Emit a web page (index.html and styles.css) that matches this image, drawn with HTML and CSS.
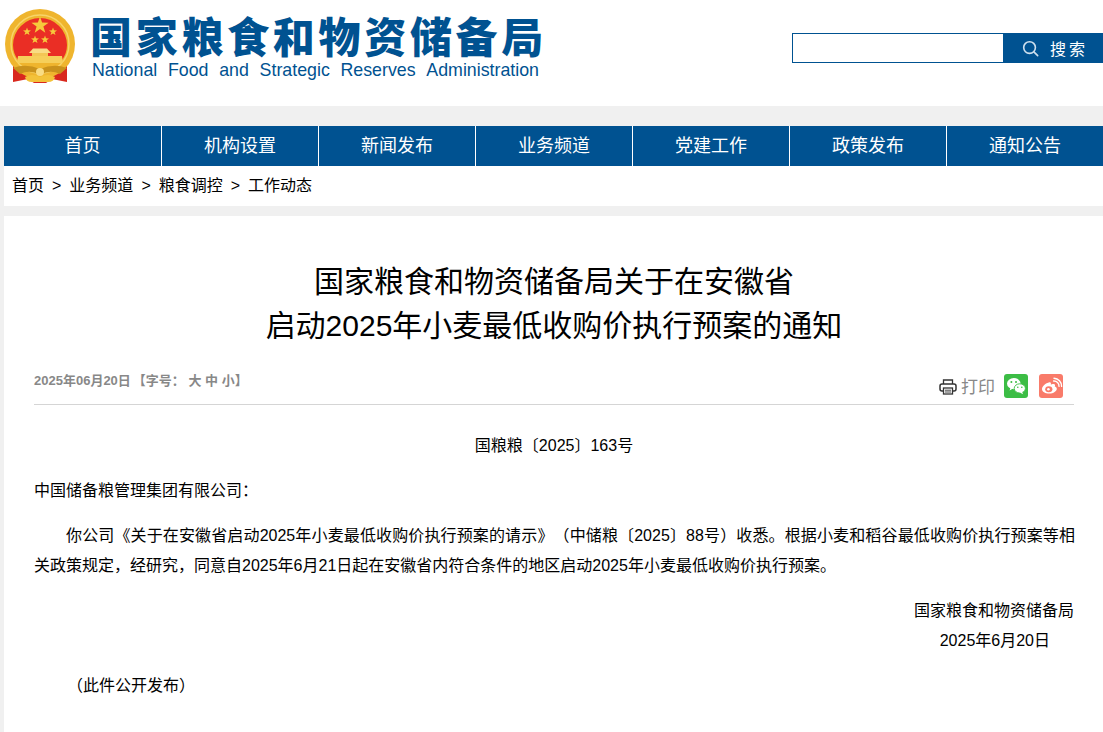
FILE: index.html
```html
<!DOCTYPE html>
<html lang="zh-CN">
<head>
<meta charset="utf-8">
<title>国家粮食和物资储备局</title>
<link rel="stylesheet" href="styles.css">
</head>
<body>
<header class="header">
  <div class="brand">
    <svg class="emblem" viewBox="0 0 72 76" width="72" height="76" aria-hidden="true">
      <path d="M9 50 L9 73 L24 70 L30 74 L42 74 L48 70 L63 73 L63 50 Z" fill="#d9281e"/>
      <circle cx="36" cy="35" r="35" fill="#efb52e"/>
      <circle cx="36" cy="35" r="29" fill="none" stroke="#f7d469" stroke-width="1.5"/>
      <path d="M9 36 A27 27 0 0 1 63 36 C63 42 61 47 58 51 L14 51 C11 47 9 42 9 36 Z" fill="#ea2e25"/>
      <polygon points="36,7.5 38.1,13.6 44.6,13.7 39.4,17.6 41.3,23.8 36,20.1 30.7,23.8 32.6,17.6 27.4,13.7 33.9,13.6" fill="#f6c93c"/>
      <polygon points="23,18.5 24,21.3 27,21.4 24.6,23.2 25.5,26.1 23,24.4 20.5,26.1 21.4,23.2 19,21.4 22,21.3" fill="#f6c93c"/>
      <polygon points="49,18.5 50,21.3 53,21.4 50.6,23.2 51.5,26.1 49,24.4 46.5,26.1 47.4,23.2 45,21.4 48,21.3" fill="#f6c93c"/>
      <polygon points="31,26.5 32,29.3 35,29.4 32.6,31.2 33.5,34.1 31,32.4 28.5,34.1 29.4,31.2 27,29.4 30,29.3" fill="#f6c93c"/>
      <polygon points="41,26.5 42,29.3 45,29.4 42.6,31.2 43.5,34.1 41,32.4 38.5,34.1 39.4,31.2 37,29.4 40,29.3" fill="#f6c93c"/>
      <path d="M25 44 L29 39.5 L43 39.5 L47 44 Z" fill="#f9dc84"/>
      <path d="M28 44 h16 v3 h-16 Z" fill="#f3c655"/>
      <path d="M24 47 h24 v4 h-24 Z" fill="#f9dc84"/>
      <path d="M14 47 h44 l1 7 h-46 Z" fill="#f6cf5a"/>
      <path d="M9 59 Q22 54 36 60 Q50 54 63 59 L56 65 Q46 60 36 66 Q26 60 16 65 Z" fill="#c9921c"/>
      <path d="M21 68 Q28 64 36 68 Q44 64 51 68 Q50 73 44 73 L28 73 Q22 73 21 68 Z" fill="#f3c23a"/>
      <circle cx="36" cy="63" r="4" fill="#f9dc84"/>
    </svg>
    <div class="brand-text">
      <div class="brand-cn">国家粮食和物资储备局</div>
      <div class="brand-en"><span>National</span><span>Food</span><span>and</span><span>Strategic</span><span>Reserves</span><span>Administration</span></div>
    </div>
  </div>
  <form class="search">
    <input class="search-input" type="text" aria-label="搜索">
    <button class="search-btn" type="button">
      <svg viewBox="0 0 18 18" width="17" height="17" aria-hidden="true"><circle cx="8" cy="8" r="6.2" fill="none" stroke="#cfe0ee" stroke-width="1.7"/><path d="M12.6 12.6 L16.6 16.6" stroke="#cfe0ee" stroke-width="1.7" stroke-linecap="round"/></svg>
      <span>搜索</span>
    </button>
  </form>
</header>
<div class="band-top"></div>
<nav class="nav">
  <a>首页</a><a>机构设置</a><a>新闻发布</a><a>业务频道</a><a>党建工作</a><a>政策发布</a><a>通知公告</a>
</nav>
<div class="crumbs"><a>首页</a><i>&gt;</i><a>业务频道</a><i>&gt;</i><a>粮食调控</a><i>&gt;</i><a>工作动态</a></div>
<main class="article">
  <h1 class="title">国家粮食和物资储备局关于在安徽省<br>启动2025年小麦最低收购价执行预案的通知</h1>
  <div class="meta">
    <div class="meta-left"><span>2025年06月20日</span><span class="size">【字号： 大 中 小】</span></div>
    <div class="meta-right">
      <svg class="printer" viewBox="0 0 18 16" width="18" height="16" aria-hidden="true"><path d="M4.5 5 V1 H13.5 V5" fill="none" stroke="#333" stroke-width="1.3"/><rect x="1" y="5" width="16" height="7" rx="2" fill="none" stroke="#333" stroke-width="1.5"/><rect x="4.5" y="9" width="9" height="6" fill="#fff" stroke="#333" stroke-width="1.3"/><path d="M6 11.2h6M6 13h6" stroke="#333" stroke-width=".9"/></svg>
      <span class="print-label">打印</span>
      <span class="share wechat">
        <svg viewBox="0 0 24 24" width="24" height="24" aria-hidden="true"><ellipse cx="9.8" cy="9.6" rx="6.8" ry="5.6" fill="#fff"/><path d="M6.5 13.5 L5.6 16.6 L9 14.6 Z" fill="#fff"/><ellipse cx="15.8" cy="14.4" rx="5.6" ry="4.6" fill="#fff" stroke="#3cbd45" stroke-width=".9"/><path d="M18 17.8 L19.2 20.2 L15.6 18.6 Z" fill="#fff"/><circle cx="7.4" cy="8" r="1" fill="#3cbd45"/><circle cx="12" cy="8" r="1" fill="#3cbd45"/><circle cx="13.8" cy="13.2" r=".8" fill="#3cbd45"/><circle cx="17.8" cy="13.2" r=".8" fill="#3cbd45"/></svg>
      </span>
      <span class="share weibo">
        <svg viewBox="0 0 24 24" width="24" height="24" aria-hidden="true"><path d="M10.5 8.2 C6.5 9 3 12.4 3 15 C3 17.8 6.4 19.6 10.2 19.6 C14.6 19.6 17.8 17.2 17.8 14.8 C17.8 13.4 16.6 12.9 15.8 12.6 C16.4 11 16 10 14.6 9.9 C13.6 9.8 12.4 10.3 11.8 10.6 C12.2 8.8 11.8 7.9 10.5 8.2 Z" fill="#fff"/><ellipse cx="9.8" cy="15.2" rx="3.6" ry="3" fill="#f97b6a"/><circle cx="9.4" cy="15.2" r="1.3" fill="#fff"/><path d="M14.6 7 A5 5 0 0 1 20 12.4 M15 4.2 A8 8 0 0 1 22.6 12.4" fill="none" stroke="#fff" stroke-width="1.4" stroke-linecap="round"/></svg>
      </span>
    </div>
  </div>
  <div class="body">
    <p class="docno">国粮粮〔2025〕163号</p>
    <p class="addressee">中国储备粮管理集团有限公司：</p>
    <p class="para">你公司《关于在安徽省启动2025年小麦最低收购价执行预案的请示》（中储粮〔2025〕88号）收悉。根据小麦和稻谷最低收购价执行预案等相关政策规定，经研究，同意自2025年6月21日起在安徽省内符合条件的地区启动2025年小麦最低收购价执行预案。</p>
    <p class="sign">国家粮食和物资储备局</p>
    <p class="date">2025年6月20日</p>
    <p class="note">（此件公开发布）</p>
  </div>
</main>
</body>
</html>
```
FILE: styles.css
```css
* { box-sizing: border-box; }
html, body { margin: 0; padding: 0; height: 732px; overflow: hidden; }
body {
  background: #f0f0f0;
  color: #000;
  font-family: "Liberation Sans", "Noto Sans CJK SC", sans-serif;
  text-spacing-trim: space-all;
}
.header {
  height: 106px;
  background: #fff;
  display: flex;
  justify-content: space-between;
  align-items: flex-start;
  padding-left: 4px;
}
.brand { display: flex; align-items: flex-start; padding-top: 9px; }
.emblem { display: block; flex: none; }
.brand-text { margin-left: 15px; width: 448px; }
.brand-cn {
  color: #005291;
  font-family: "Noto Sans CJK SC", sans-serif;
  font-weight: 900;
  font-size: 42px;
  line-height: 42px;
  letter-spacing: 3.7px;
  white-space: nowrap;
  margin: 5px 0 0 -1px;
}
.brand-en {
  color: #005291;
  font-size: 17.8px;
  line-height: 20px;
  display: flex;
  justify-content: space-between;
  margin-top: 4px;
  padding-left: 1px;
  white-space: nowrap;
}
.search { display: flex; margin-top: 33px; }
.search-input {
  width: 212px;
  height: 30px;
  border: 1px solid #005291;
  background: #fff;
  padding: 0 4px;
  outline: none;
}
.search-btn {
  width: 99px;
  height: 30px;
  border: 0;
  padding: 0 0 0 18px;
  background: #005291;
  color: #fff;
  display: flex;
  align-items: center;
  gap: 11px;
  font-family: "Noto Sans CJK SC", sans-serif;
  font-size: 16px;
  letter-spacing: 3px;
}
.search-btn span { white-space: nowrap; }
.band-top { height: 20px; }
.nav {
  height: 40px;
  margin-left: 4px;
  background: #005291;
  display: flex;
}
.nav a {
  width: 157px;
  flex: none;
  border-left: 1px solid #fff;
  color: #fff;
  text-align: center;
  font-size: 18px;
  line-height: 40px;
}
.nav a:first-child { border-left: 0; }
.crumbs {
  height: 40px;
  margin: 0 0 10px 4px;
  padding-left: 8px;
  background: #fff;
  display: flex;
  align-items: center;
  font-size: 16px;
  line-height: 40px;
}
.crumbs i { font-style: normal; margin: 0 8px; font-size: 16px; }
.article {
  margin-left: 4px;
  background: #fff;
  padding: 44px 29px 0 30px;
  height: 516px;
}
.title {
  margin: 0;
  text-align: center;
  font-weight: 400;
  font-size: 30px;
  line-height: 44px;
}
.meta {
  height: 43px;
  margin-top: 14px;
  border-bottom: 1px solid #d5d5d5;
  display: flex;
  justify-content: space-between;
  align-items: flex-start;
}
.meta-left {
  color: #888;
  font-size: 13px;
  font-weight: 700;
  line-height: 18px;
  padding-top: 10px;
  display: flex;
  gap: 2px;
}
.meta-right { display: flex; align-items: center; padding-top: 10px; padding-right: 11px; }
.printer { display: block; margin-right: 4px; margin-top: 2px; }
.print-label { color: #888; font-size: 17px; line-height: 24px; white-space: nowrap; margin-top: 4px; }
.share { width: 24px; height: 24px; border-radius: 3px; display: block; margin-left: 9px; }
.share svg { display: block; }
.wechat { background: #3cbd45; }
.weibo { background: #f97b6a; margin-left: 11px; }
.body { font-size: 16px; line-height: 30px; }
.body p { margin: 0; }
.docno { text-align: center; margin-top: 26px !important; }
.addressee { margin-top: 15px !important; }
.para { margin-top: 15px !important; text-indent: 2em; margin-right: -1px !important; text-align: justify; }
.sign { margin-top: 15px !important; text-align: right; }
.date { text-align: right; padding-right: 24px; margin-top: 0 !important; }
.note { margin-top: 15px !important; padding-left: 33px; }
```
